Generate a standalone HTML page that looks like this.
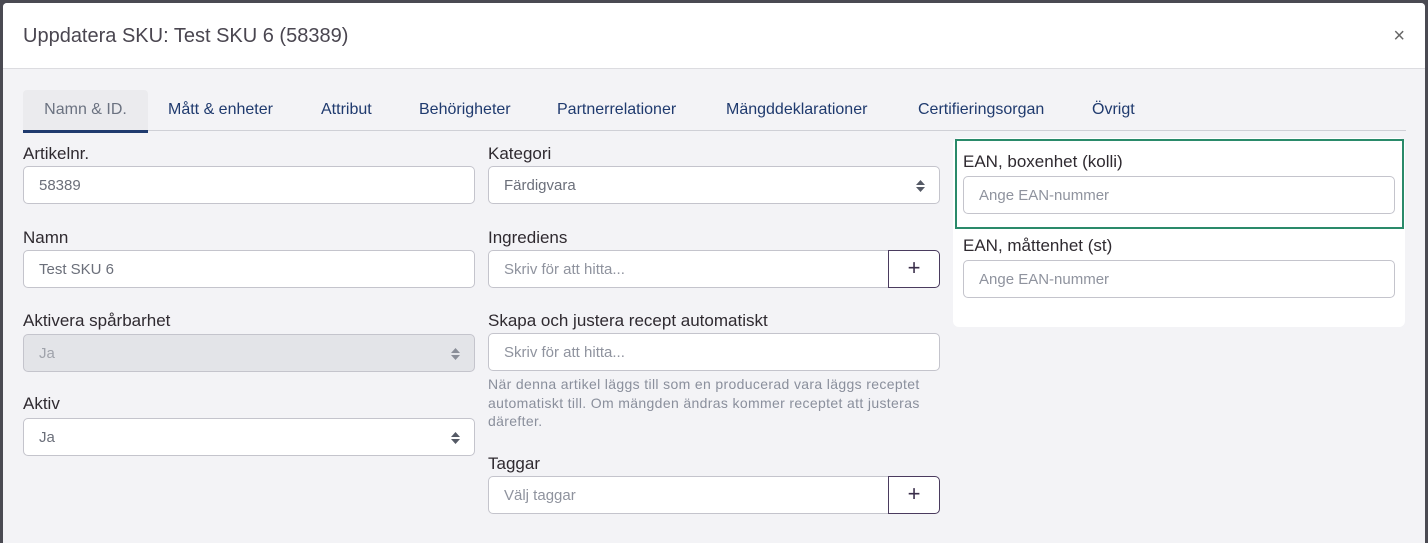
<!DOCTYPE html>
<html><head><meta charset="utf-8"><style>
*{box-sizing:border-box;margin:0;padding:0}
body{width:1428px;height:538px;overflow:hidden;background:#4a4a52;font-family:"Liberation Sans",sans-serif;position:relative}
.modal{position:absolute;left:3px;top:3px;width:1422px;height:540px;background:#f3f3f6;border-radius:4px 4px 0 0;overflow:hidden}
.hdr{height:66px;background:#fff;border-bottom:1px solid #dcdce0;position:relative}
.hdr h1{position:absolute;left:20px;top:22px;font-size:20px;font-weight:normal;color:#4a4650}
.x{position:absolute;right:20px;top:22px;font-size:20px;color:#666}
.a{position:absolute}
.tabline{left:20px;top:127px;width:1383px;height:1px;background:#cfd0d6}
.tab{top:98px;font-size:16px;color:#1f3a6e}
.act{left:20px;top:87px;width:125px;height:43px;background:#ebebee;border-radius:4px 4px 0 0;border-bottom:3px solid #1f3a6e;color:#6b7280;font-size:16px;text-align:center;padding-top:11px}
.lbl{font-size:17px;color:#2f2a30}
.inp{background:#fff;border:1px solid #c4c4cc;border-radius:5px;height:38px;font-size:15px;color:#6b6f7a;padding:10px 0 0 15px}
.ph{color:#8f939e}
.dis{background:#e3e4e8;color:#a0a3ab}
.arr{position:absolute;right:14px;top:13px;width:9px;height:12px}
.btn{border:1px solid #4a3b5e;border-radius:0 5px 5px 0;background:#fff;width:52px;height:38px;text-align:center;font-size:22px;color:#3a2e4a;line-height:34px}
.help{font-size:14px;letter-spacing:.35px;color:#8a8f9c;line-height:18.5px;white-space:nowrap}
</style></head><body>
<div class="modal">
<div class="hdr"><h1>Uppdatera SKU: Test SKU 6 (58389)</h1><div class="x">×</div></div>
<div class="a tabline"></div>
<div class="a act">Namn &amp; ID.</div>
<div class="a tab" style="left:165px">Mått &amp; enheter</div>
<div class="a tab" style="left:318px">Attribut</div>
<div class="a tab" style="left:416px">Behörigheter</div>
<div class="a tab" style="left:554px">Partnerrelationer</div>
<div class="a tab" style="left:723px">Mängddeklarationer</div>
<div class="a tab" style="left:915px">Certifieringsorgan</div>
<div class="a tab" style="left:1089px">Övrigt</div>

<div class="a lbl" style="left:20px;top:141px">Artikelnr.</div>
<div class="a inp" style="left:20px;top:163px;width:452px">58389</div>
<div class="a lbl" style="left:20px;top:225px">Namn</div>
<div class="a inp" style="left:20px;top:247px;width:452px">Test SKU 6</div>
<div class="a lbl" style="left:20px;top:308px">Aktivera spårbarhet</div>
<div class="a inp dis" style="left:20px;top:331px;width:452px">Ja<svg class="arr" viewBox="0 0 9 12"><path d="M0 5L4.5 0L9 5Z M0 7L4.5 12L9 7Z" fill="#8a8e98"/></svg></div>
<div class="a lbl" style="left:20px;top:391px">Aktiv</div>
<div class="a inp" style="left:20px;top:415px;width:452px">Ja<svg class="arr" viewBox="0 0 9 12"><path d="M0 5L4.5 0L9 5Z M0 7L4.5 12L9 7Z" fill="#555a66"/></svg></div>

<div class="a lbl" style="left:485px;top:141px">Kategori</div>
<div class="a inp" style="left:485px;top:163px;width:452px">Färdigvara<svg class="arr" viewBox="0 0 9 12"><path d="M0 5L4.5 0L9 5Z M0 7L4.5 12L9 7Z" fill="#555a66"/></svg></div>
<div class="a lbl" style="left:485px;top:225px">Ingrediens</div>
<div class="a inp ph" style="left:485px;top:247px;width:402px;border-radius:5px 0 0 5px">Skriv för att hitta...</div>
<div class="a btn" style="left:885px;top:247px">+</div>
<div class="a lbl" style="left:485px;top:308px">Skapa och justera recept automatiskt</div>
<div class="a inp ph" style="left:485px;top:330px;width:452px">Skriv för att hitta...</div>
<div class="a help" style="left:485px;top:372px">När denna artikel läggs till som en producerad vara läggs receptet<br>automatiskt till. Om mängden ändras kommer receptet att justeras<br>därefter.</div>
<div class="a lbl" style="left:485px;top:451px">Taggar</div>
<div class="a inp ph" style="left:485px;top:473px;width:402px;border-radius:5px 0 0 5px">Välj taggar</div>
<div class="a btn" style="left:885px;top:473px">+</div>

<div class="a" style="left:950px;top:135px;width:452px;height:189px;background:#fff;border-radius:6px"></div>
<div class="a" style="left:952px;top:136px;width:449px;height:90px;border:2px solid #2a8a6a"></div>
<div class="a lbl" style="left:960px;top:149px">EAN, boxenhet (kolli)</div>
<div class="a inp ph" style="left:960px;top:173px;width:432px">Ange EAN-nummer</div>
<div class="a lbl" style="left:960px;top:233px">EAN, måttenhet (st)</div>
<div class="a inp ph" style="left:960px;top:257px;width:432px">Ange EAN-nummer</div>
</div>
</body></html>
